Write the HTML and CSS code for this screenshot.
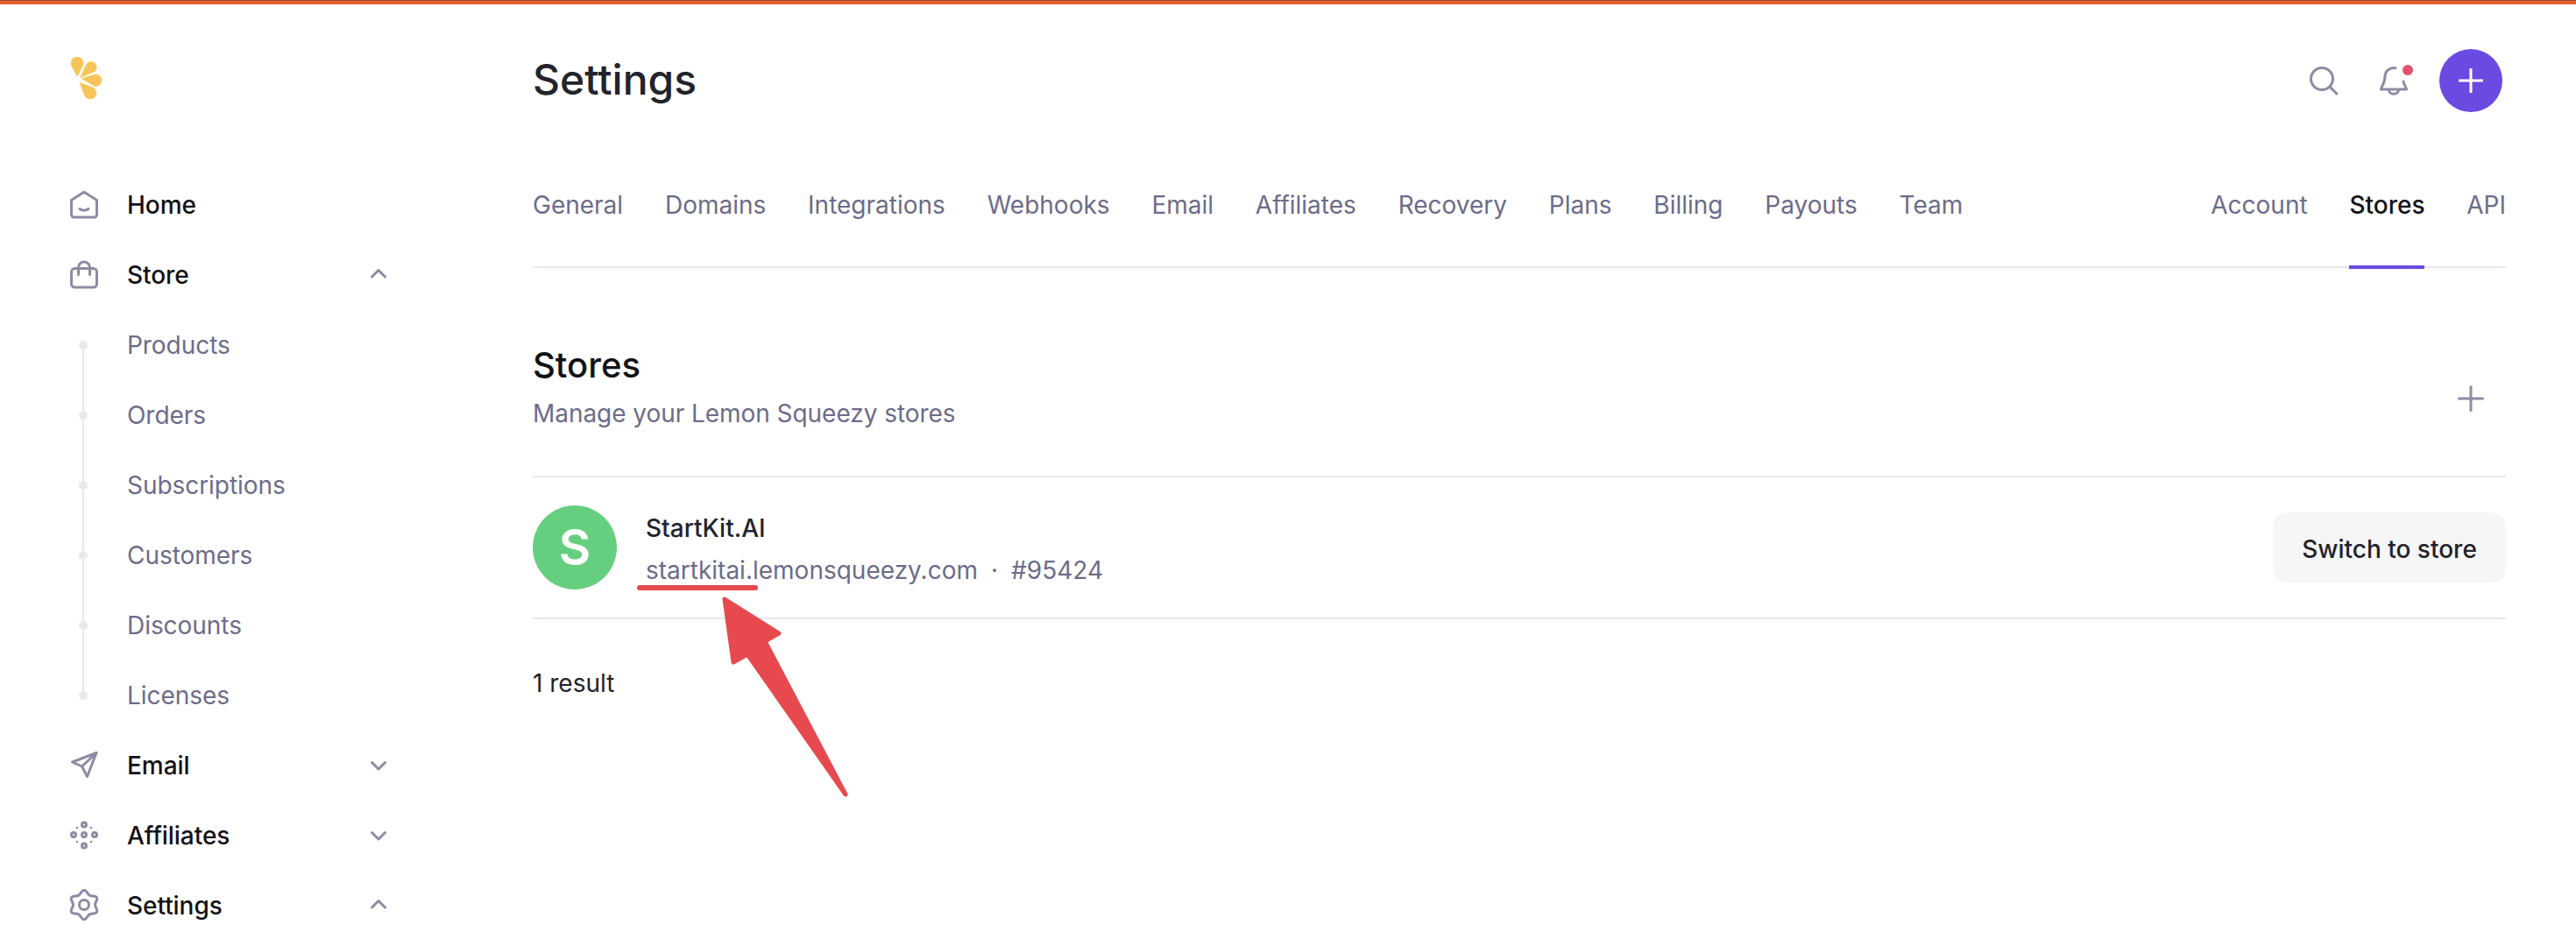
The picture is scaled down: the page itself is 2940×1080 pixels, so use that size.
FILE: index.html
```html
<!DOCTYPE html>
<html lang="en">
<head>
<meta charset="utf-8">
<title>Settings</title>
<link rel="stylesheet" href="styles.css">
</head>
<body>
<div class="topbar"></div>
<div class="app">
  <aside class="sidebar">
    <svg class="logo" viewBox="0 0 36 48" width="36" height="48">
      <path d="M8.3 22.3L14.3 10.07A7 7 0 1 0 1.92 10.47Z"/>
      <path d="M11.7 23.3L26.3 17.46A6.2 6.2 0 1 0 18.4 9.06Z"/>
      <path d="M13 24.5L25.99 32.34A6.6 6.6 0 1 0 27.71 20.32Z"/>
      <path d="M11 29.3L16.45 43.77A7 7 0 1 0 25.47 34.75Z"/>
    </svg>
    <nav class="menu">
      <a class="menu-item">
        <svg class="ico" viewBox="0 0 32 32"><path d="M16 1.2L30.5 10.6V27a3 3 0 0 1-3 3H4.5a3 3 0 0 1-3-3V10.6Z"/><path d="M11 20.5q5 3.5 10 0"/></svg>
        <span class="label">Home</span>
      </a>
      <a class="menu-item">
        <svg class="ico" viewBox="0 0 32 32"><rect x="1.5" y="8.5" width="29" height="21.5" rx="4"/><path d="M9.5 15.5V7.5a6.5 6.5 0 0 1 13 0V15.5"/></svg>
        <span class="label">Store</span>
        <svg class="chev" viewBox="0 0 16 16"><path d="M.5 10L8 2.5L15.5 10"/></svg>
      </a>
      <div class="sub">
        <a class="sub-item"><i class="dot"></i>Products</a>
        <a class="sub-item"><i class="dot"></i>Orders</a>
        <a class="sub-item"><i class="dot"></i>Subscriptions</a>
        <a class="sub-item"><i class="dot"></i>Customers</a>
        <a class="sub-item"><i class="dot"></i>Discounts</a>
        <a class="sub-item"><i class="dot"></i>Licenses</a>
      </div>
      <a class="menu-item">
        <svg class="ico" viewBox="0 0 32 32"><path d="M30 1.5L2.5 12L13.5 17L19.5 28.5Z"/><path d="M30 1.5L13.5 17"/></svg>
        <span class="label">Email</span>
        <svg class="chev" viewBox="0 0 16 16"><path d="M.5 4.5L8 12L15.5 4.5"/></svg>
      </a>
      <a class="menu-item">
        <svg class="ico" viewBox="0 0 32 32">
          <circle cx="16" cy="3.5" r="2.5"/><circle cx="16" cy="15" r="2.5"/><circle cx="16" cy="27.5" r="2.5"/><circle cx="4" cy="15" r="2.5"/><circle cx="28" cy="15" r="2.5"/>
          <g class="fill"><circle cx="8" cy="7" r="1.3"/><circle cx="24" cy="7" r="1.3"/><circle cx="8" cy="23" r="1.3"/><circle cx="24" cy="23" r="1.3"/></g>
        </svg>
        <span class="label">Affiliates</span>
        <svg class="chev" viewBox="0 0 16 16"><path d="M.5 4.5L8 12L15.5 4.5"/></svg>
      </a>
      <a class="menu-item">
        <svg class="ico gear" viewBox="-18 -18 36 36"><path d="M0-16.7C3.2-16.7 3.48-12.43 6.25-10.83C9.02-9.23 12.86-11.12 14.46-8.35C16.06-5.58 12.5-3.2 12.5 0C12.5 3.2 16.06 5.58 14.46 8.35C12.86 11.12 9.02 9.23 6.25 10.83C3.48 12.43 3.2 16.7 0 16.7C-3.2 16.7-3.48 12.43-6.25 10.83C-9.02 9.23-12.86 11.12-14.46 8.35C-16.06 5.58-12.5 3.2-12.5 0C-12.5-3.2-16.06-5.58-14.46-8.35C-12.86-11.12-9.02-9.23-6.25-10.83C-3.48-12.43-3.2-16.7 0-16.7Z"/><circle r="5.5"/></svg>
        <span class="label">Settings</span>
        <svg class="chev" viewBox="0 0 16 16"><path d="M.5 10L8 2.5L15.5 10"/></svg>
      </a>
    </nav>
  </aside>
  <main class="content">
    <header class="head">
      <h1 class="title">Settings</h1>
      <div class="actions">
        <svg class="ico" viewBox="0 0 32 32"><circle cx="14" cy="14" r="12.5"/><path d="M23.5 23.5L31 31"/></svg>
        <span class="bell">
          <svg class="ico" viewBox="0 0 32 32"><path d="M18 1.7A10 10 0 0 0 6 11.5C6 19 1.5 23 1.5 26H30.5C30.5 24 28 21.5 27 17"/><path d="M10.5 26.5a5.5 4.8 0 0 0 11 0"/></svg>
          <i class="badge"></i>
        </span>
        <button class="add"><svg viewBox="0 0 28 28" width="28" height="28"><path d="M14 0.5V27.5M0.5 14H27.5"/></svg></button>
      </div>
    </header>
    <nav class="tabs">
      <a class="tab">General</a><a class="tab">Domains</a><a class="tab">Integrations</a><a class="tab">Webhooks</a><a class="tab">Email</a><a class="tab">Affiliates</a><a class="tab">Recovery</a><a class="tab">Plans</a><a class="tab">Billing</a><a class="tab">Payouts</a><a class="tab">Team</a>
      <a class="tab push">Account</a><a class="tab active">Stores</a><a class="tab">API</a>
    </nav>
    <section class="section-head">
      <div>
        <h2 class="section-title">Stores</h2>
        <p class="section-sub">Manage your Lemon Squeezy stores</p>
      </div>
      <button class="plain-add"><svg class="ico" viewBox="0 0 28 28" width="28" height="28"><path d="M14 0.5V27.5M0.5 14H27.5"/></svg></button>
    </section>
    <div class="store">
      <div class="avatar">S</div>
      <div class="store-info">
        <div class="store-name">StartKit.AI</div>
        <div class="store-meta"><span>startkitai.lemonsqueezy.com</span><span class="sep">·</span><span>#95424</span></div>
      </div>
      <button class="switch">Switch to store</button>
    </div>
    <p class="count">1 result</p>
  </main>
</div>
<svg class="annotation" viewBox="0 0 2940 1080" width="2940" height="1080">
  <path class="under" d="M730 671H862"/>
  <path class="arrow" d="M827 684L889 723L873 732L965 907L853 747L837 756Z"/>
</svg>
</body>
</html>
```
FILE: styles.css
```css
* { box-sizing: border-box; }
html, body { margin: 0; height: 1080px; overflow: hidden; background: #fff; }
body { font-family: Inter, "Liberation Sans", sans-serif; font-size: 28px; color: #121217; position: relative; }
a { display: block; }
.topbar { height: 5px; background: #e85d2c; border-top: 1px solid #9c4a2e; }
.app { display: flex; height: 1075px; }
.sidebar { width: 608px; padding: 60px 0 0 80px; flex: none; }
.logo { display: block; }
.logo path { fill: #f7c557; stroke: #f7c557; stroke-width: 0.6; stroke-linejoin: round; }
.menu { margin-top: 81px; width: 360px; }
.menu-item { display: flex; align-items: center; height: 80px; font-weight: 500; letter-spacing: -0.05px; }
.ico { width: 32px; height: 32px; flex: none; fill: none; stroke: #8c8ca4; stroke-width: 3; stroke-linecap: round; stroke-linejoin: round; overflow: visible; }
.ico .fill { fill: #8c8ca4; stroke: none; }
.gear { width: 36px; height: 36px; margin: -3px -2px 0; }
.label { margin-left: 33px; flex: 1; }
.chev { width: 16px; height: 16px; fill: none; stroke: #8c8ca4; stroke-width: 3; stroke-linecap: round; stroke-linejoin: round; overflow: visible; }
.sub { background: linear-gradient(#e8e8ef, #e8e8ef) no-repeat 14px 40px / 2px calc(100% - 80px); }
.sub-item { display: flex; align-items: center; height: 80px; padding-left: 10px; color: #6c6c89; letter-spacing: -0.05px; }
.dot { width: 10px; height: 10px; border-radius: 50%; background: #e8e8ef; margin-right: 45px; flex: none; }
.content { flex: 1; padding-right: 80px; min-width: 0; }
.head { display: flex; justify-content: space-between; align-items: center; padding-top: 51px; height: 123px; }
.title { margin: -3px 0 0; font-size: 48px; font-weight: 450; line-height: 72px; color: #23232c; }
.actions { display: flex; align-items: center; gap: 48px; margin-right: 4px; }
.bell { position: relative; display: block; height: 32px; }
.badge { position: absolute; right: -6px; top: -2px; width: 12px; height: 12px; background: #e5506e; border-radius: 50%; }
.add { width: 72px; height: 72px; margin-left: -12px; border: 0; padding: 0; border-radius: 50%; background: #6a4ae0; display: flex; align-items: center; justify-content: center; }
.add path { stroke: #fff; stroke-width: 3; stroke-linecap: round; fill: none; }
.tabs { display: flex; gap: 47.8px; margin-top: 66px; height: 112px; border-bottom: 2px solid #e8e8ef; }
.tab { height: 113px; border-bottom: 4px solid transparent; line-height: 80px; color: #6c6c89; }
.push { margin-left: auto; }
.active { color: #121217; font-weight: 500; border-bottom-color: #6a4ae0; }
.section-head { display: flex; justify-content: space-between; padding: 91px 0 51px; border-bottom: 2px solid #e8e8ef; height: 239px; }
.section-title { margin: 0 0 15px; font-size: 40px; font-weight: 500; line-height: 40px; }
.section-sub { margin: 0; line-height: 40px; color: #6c6c89; letter-spacing: -0.05px; }
.plain-add { width: 80px; height: 80px; margin-top: 18px; border: 0; padding: 0; background: none; display: flex; align-items: center; justify-content: center; }
.plain-add .ico { width: 28px; height: 28px; }
.store { display: flex; align-items: center; height: 162px; border-bottom: 2px solid #e8e8ef; }
.avatar { width: 96px; height: 96px; border-radius: 50%; background: #66cf7f; color: #fff; font-size: 56px; font-weight: 600; display: flex; align-items: center; justify-content: center; flex: none; }
.store-info { flex: 1; margin-left: 33px; padding-top: 4px; line-height: 48px; }
.store-name { font-weight: 500; color: #23232c; }
.store-meta { color: #6c6c89; }
.sep { margin: 0 15px; }
.switch { width: 266px; height: 80px; border: 0; border-radius: 16px; background: #f6f6f7; font: 500 28px Inter, "Liberation Sans", sans-serif; color: #23232c; padding: 3px 0 0; }
.count { margin: 53px 0 0; line-height: 40px; color: #23232c; }
.annotation { position: absolute; left: 0; top: 0; pointer-events: none; }
.under { fill: none; stroke: #e64a4f; stroke-width: 6; stroke-linecap: round; }
.arrow { fill: #e64a4f; stroke: #e64a4f; stroke-width: 5; stroke-linejoin: round; }
```
